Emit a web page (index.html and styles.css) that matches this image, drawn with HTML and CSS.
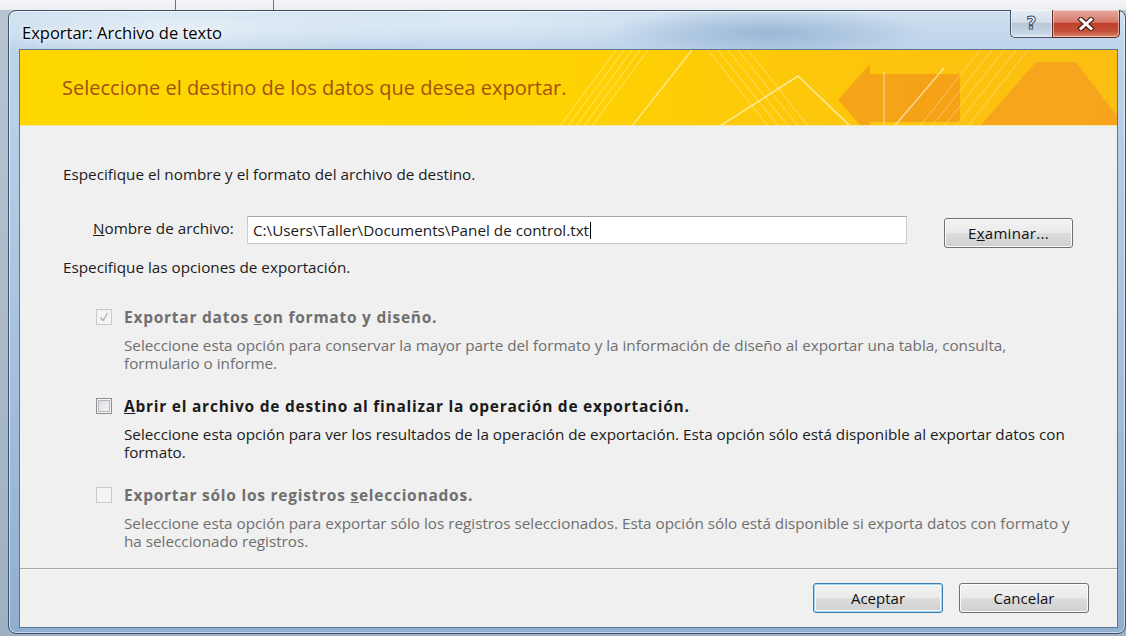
FILE: index.html
```html
<!DOCTYPE html>
<html lang="es">
<head>
<meta charset="utf-8">
<title>Exportar: Archivo de texto</title>
<link rel="stylesheet" href="styles.css">
</head>
<body>
  <div class="window">
    <div class="titlebar">
      <span class="title">Exportar: Archivo de texto</span>
      <div class="caption-buttons">
        <div class="cap-btn cap-help"><span class="help-glyph">?</span></div>
        <div class="cap-btn cap-close">
          <svg width="18" height="14" viewBox="0 0 18 14">
            <path d="M4 2.5 L14 11.5 M14 2.5 L4 11.5" stroke="#4a1f1a" stroke-width="5.2" stroke-linecap="square" fill="none"/>
            <path d="M4 2.5 L14 11.5 M14 2.5 L4 11.5" stroke="#ffffff" stroke-width="3" stroke-linecap="square" fill="none"/>
          </svg>
        </div>
      </div>
    </div>

    <div class="client">
      <div class="banner">
        <svg class="banner-art" viewBox="0 0 1097 76" preserveAspectRatio="none">
          <g stroke="#fff" fill="none">
            <g stroke-opacity="0.45" stroke-width="1">
              <path d="M540 76 L596 0 M548 76 L604 0 M556 76 L612 0 M564 76 L620 0 M572 76 L628 0"/>
            </g>
            <path d="M612 76 L672 0" stroke-opacity="0.5" stroke-width="1.5"/>
            <g stroke-opacity="0.4" stroke-width="1">
              <path d="M688 0 L748 76 M698 0 L758 76 M708 0 L768 76 M718 0 L778 76 M728 0 L788 76"/>
            </g>
            <path d="M700 76 L778 26 L830 76" stroke-opacity="0.6" stroke-width="1.5"/>
          </g>
          <polygon points="818,50 850,14 850,24 940,24 940,72 850,72 850,86" fill="#f29a1a" fill-opacity="0.8"/>
          <path d="M864 22 L864 76" stroke="#fff" stroke-opacity="0.4" stroke-width="1.5"/>
          <path d="M860 93 L924 18" stroke="#fff" stroke-opacity="0.55" stroke-width="1.5"/>
          <g stroke="#fff" stroke-opacity="0.35" stroke-width="1" fill="none">
            <path d="M900 76 L960 0 M912 76 L972 0 M924 76 L984 0 M936 76 L996 0 M948 76 L1008 0"/>
          </g>
          <polygon points="960,76 1016,12 1056,12 1100,70 1100,76" fill="#f6a01e" fill-opacity="0.85"/>
        </svg>
        <h1 class="banner-title">Seleccione el destino de los datos que desea exportar.</h1>
      </div>

      <div class="content">
        <p class="intro">Especifique el nombre y el formato del archivo de destino.</p>

        <div class="file-row">
          <span class="file-label"><u>N</u>ombre de archivo:</span>
          <div class="textbox"><span class="value">C:\Users\Taller\Documents\Panel de control.txt</span><span class="caret"></span></div>
          <div class="btn browse">E<u>x</u>aminar...</div>
        </div>

        <p class="intro options-intro">Especifique las opciones de exportación.</p>

        <div class="option disabled">
          <span class="check">
            <svg width="14" height="14" viewBox="0 0 14 14"><path d="M3.5 7.5 L6 10.5 L10.5 3" stroke="#b0b0b0" stroke-width="1.4" fill="none"/></svg>
          </span>
          <span class="opt-label">Exportar datos <u>c</u>on formato y diseño.</span>
          <span class="opt-desc">Seleccione esta opción para conservar la mayor parte del formato y la información de diseño al exportar una tabla, consulta,<br>formulario o informe.</span>
        </div>

        <div class="option">
          <span class="check"></span>
          <span class="opt-label"><u>A</u>brir el archivo de destino al finalizar la operación de exportación.</span>
          <span class="opt-desc">Seleccione esta opción para ver los resultados de la operación de exportación. Esta opción sólo está disponible al exportar datos con<br>formato.</span>
        </div>

        <div class="option disabled">
          <span class="check"></span>
          <span class="opt-label">Exportar sólo los registros <u>s</u>eleccionados.</span>
          <span class="opt-desc">Seleccione esta opción para exportar sólo los registros seleccionados. Esta opción sólo está disponible si exporta datos con formato y<br>ha seleccionado registros.</span>
        </div>
      </div>

      <div class="footer">
        <div class="btn default">Aceptar</div>
        <div class="btn">Cancelar</div>
      </div>
    </div>
  </div>
</body>
</html>
```
FILE: styles.css
```css
* { box-sizing: border-box; }

html, body {
  margin: 0;
  height: 100%;
}

body {
  overflow: hidden;
  padding: 10px 0 0 8px;
  font-family: "Open Sans", "Noto Sans", sans-serif;
  background:
    linear-gradient(#6f757d, #6f757d) 175px 0 / 1px 10px no-repeat,
    linear-gradient(#6f757d, #6f757d) 273px 0 / 1px 10px no-repeat,
    linear-gradient(to bottom, #f4f5f7 0, #eceef1 10px, transparent 10px),
    linear-gradient(to bottom, #b9c4d0, #9fb0c3);
}

/* Aero window frame */
.window {
  width: 1118px;
  height: 624px;
  border: 1px solid #3b536e;
  border-radius: 8px;
  padding: 0 7px 5px 10px;
  display: flex;
  flex-direction: column;
  background:
    radial-gradient(ellipse 260px 30px at 180px 18px, rgba(255,255,255,0.55), transparent),
    radial-gradient(ellipse 160px 26px at 760px 22px, rgba(120,155,195,0.55), transparent),
    radial-gradient(ellipse 220px 30px at 470px 12px, rgba(235,243,250,0.6), transparent),
    linear-gradient(to bottom, #cfe0f0 0, #bcd3ea 40px, #a9c4e0 300px, #8faed0 624px);
  box-shadow: inset 0 0 0 1px rgba(255,255,255,0.55);
}

.titlebar {
  height: 38px;
  flex: none;
  display: flex;
  justify-content: space-between;
  align-items: flex-start;
}

.title {
  padding: 11px 0 0 3px;
  font-size: 16.5px;
  line-height: 22px;
  color: #000;
  text-shadow: 0 0 6px rgba(255,255,255,0.9), 0 0 3px rgba(255,255,255,0.8);
}

.caption-buttons {
  display: flex;
  margin: -1px -2px 0 0;
}

.cap-btn {
  height: 28px;
  border: 1px solid #44556b;
  border-top: none;
  display: flex;
  align-items: center;
  justify-content: center;
  box-shadow: inset 0 0 0 1px rgba(255,255,255,0.45);
}

.cap-help {
  width: 42px;
  border-right: none;
  border-radius: 0 0 0 5px;
  background: linear-gradient(to bottom, #e6edf5 0%, #d3dee9 45%, #b8c8da 50%, #c6d5e5 85%, #d6e2ee 100%);
}

.help-glyph {
  font-family: "DejaVu Sans", sans-serif;
  font-weight: bold;
  font-size: 17px;
  line-height: 1;
  color: #eef3f8;
  -webkit-text-stroke: 1px #3d4f66;
  margin-top: -1px;
}

.cap-close {
  width: 68px;
  border-color: #5b2a24;
  border-radius: 0 0 5px 0;
  background: linear-gradient(to bottom, #e7aa9d 0%, #d57b6b 45%, #c1412d 50%, #c6513b 80%, #e08a6f 100%);
}

/* Client area */
.client {
  flex: 1;
  display: flex;
  flex-direction: column;
  border: 1px solid #5d7590;
  background: #f0f0f0;
  overflow: hidden;
}

.banner {
  position: relative;
  height: 76px;
  flex: none;
  display: flex;
  align-items: center;
  overflow: hidden;
  background: linear-gradient(90deg, #ffd800 0%, #ffd400 45%, #fdc80a 70%, #fbbe12 100%);
  border-bottom: 1px solid #f3e7a6;
}

.banner-art {
  position: absolute;
  left: 0;
  top: 0;
  width: 1097px;
  height: 76px;
}

.banner-title {
  position: relative;
  margin: 0;
  padding-left: 42px;
  font-size: 20px;
  font-weight: normal;
  color: #a0530e;
}

.content {
  flex: 1;
  padding: 39px 0 0 43px;
  font-size: 15.25px;
  line-height: 18px;
  color: #1b1b1b;
}

.intro { margin: 0; }

.file-row {
  display: flex;
  align-items: flex-start;
  margin: 33px 0 0 30px;
}

.file-label {
  width: 154px;
  margin-top: 3px;
}

.textbox {
  width: 660px;
  height: 28px;
  display: flex;
  align-items: center;
  padding-left: 5px;
  background: #fff;
  border: 1px solid #c6ccd4;
  border-top-color: #a3a9b2;
}

.caret {
  width: 1px;
  height: 17px;
  margin-left: 1px;
  background: #000;
}

.btn {
  width: 130px;
  height: 30px;
  display: flex;
  align-items: center;
  justify-content: center;
  font-size: 15px;
  color: #111;
  border: 1px solid #707070;
  border-radius: 3px;
  background: linear-gradient(to bottom, #f2f2f2 0%, #ebebeb 48%, #dddddd 52%, #cfcfcf 100%);
  box-shadow: inset 0 0 0 1px #fbfbfb;
}

.browse {
  margin: 2px 0 0 37px;
  width: 129px;
  letter-spacing: 0.3px;
}

.options-intro { margin-top: 10px; }

.option {
  display: grid;
  grid-template-columns: 16px 1fr;
  column-gap: 12px;
  margin: 32px 0 0 33px;
}

.option + .option { margin-top: 25px; }

.check {
  width: 16px;
  height: 16px;
  margin-top: 1px;
  display: flex;
  align-items: center;
  justify-content: center;
  border: 1px solid #8e8f8f;
  background: linear-gradient(135deg, #dadcdf, #f7f7f7);
  box-shadow: inset 0 0 0 1px #f4f4f4, inset 0 0 0 2px #b2b6bb;
}

.opt-label {
  font-weight: bold;
  font-size: 15.5px;
  letter-spacing: 0.75px;
}

.opt-desc {
  grid-column: 2;
  margin-top: 10px;
}

.option.disabled { color: #6f6f6f; }

.option.disabled .check {
  border-color: #c9c9c9;
  background: #f4f4f4;
  box-shadow: none;
}

/* Dialog footer */
.footer {
  height: 59px;
  flex: none;
  display: flex;
  justify-content: flex-end;
  gap: 16px;
  padding: 14px 28px 0 0;
  border-top: 1px solid #a5a5a5;
  box-shadow: inset 0 1px 0 #fafafa;
}

.btn.default {
  border-color: #3c7fb1;
  box-shadow: inset 0 0 0 1px #9fd5f3, inset 0 0 0 2px #f6fbfe;
}
```
